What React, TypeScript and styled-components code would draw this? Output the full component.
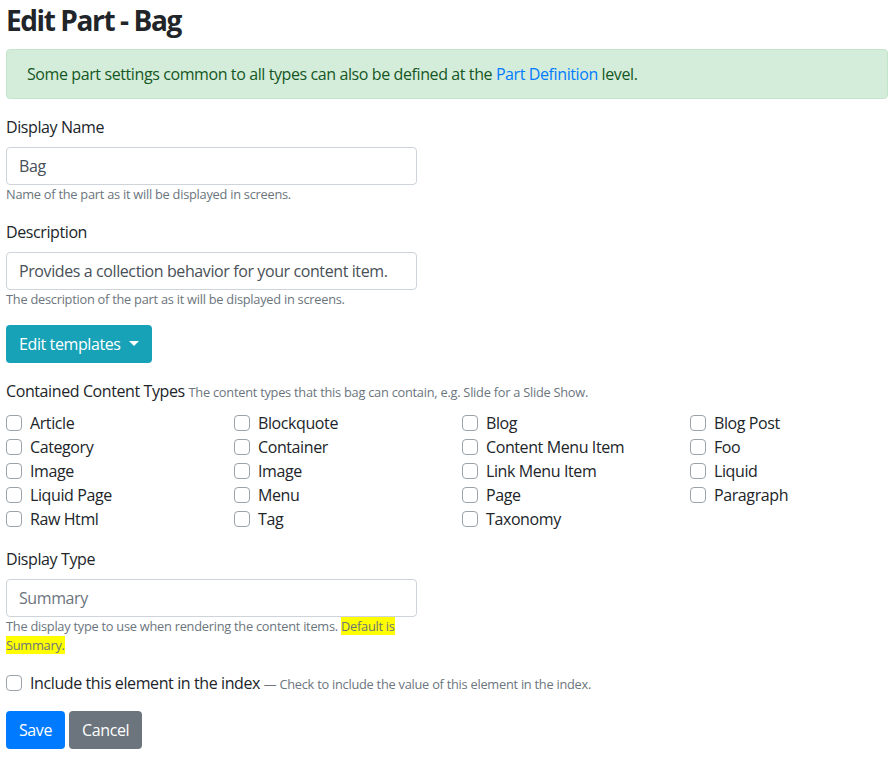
import { useState } from 'react';
import styled, { createGlobalStyle } from 'styled-components';

const GlobalStyle = createGlobalStyle`
    body {
        margin: 0;
        font-family: "Open Sans", "Noto Sans", sans-serif;
        font-size: 16px;
        line-height: 1.5;
        letter-spacing: -0.4px;
        color: #212529;
        background: #fff;
    }
`;

const Page = styled.div`
    padding: 0 6px;
`;
const Title = styled.h1`
    margin: 4px 0 11px;
    font-size: 28px;
    font-weight: 700;
    line-height: 1.2;
    letter-spacing: -1.4px;
`;
const Alert = styled.div`
    padding: 12px 20px;
    margin-bottom: 16px;
    background: #d4edda;
    border: 1px solid #c3e6cb;
    border-radius: 4px;
    color: #155724;
`;
const Link = styled.a`
    color: #007bff;
    text-decoration: none;
`;
const FormGroup = styled.div<{narrow?: boolean}>`
    margin-bottom: 16px;
    max-width: ${props => props.narrow ? "411px" : "none"};
`;
const Label = styled.label`
    display: inline-block;
    margin-bottom: 8px;
`;
const Input = styled.input`
    display: block;
    box-sizing: border-box;
    width: 100%;
    height: 38px;
    padding: 6px 12px;
    font: inherit;
    letter-spacing: inherit;
    color: #495057;
    border: 1px solid #ced4da;
    border-radius: 4px;
    background: #fff;
    &::placeholder {
        color: #6c757d;
    }
`;
const Hint = styled.small`
    display: block;
    font-size: 12.8px;
    line-height: 1.5;
    letter-spacing: -0.25px;
    color: #6c757d;
`;
const InlineHint = styled.span`
    font-size: 12.8px;
    letter-spacing: -0.25px;
    color: #6c757d;
`;
const Highlight = styled.span`
    background: #ffff00;
`;
const Button = styled.button<{variant: "info" | "primary" | "secondary"}>`
    display: inline-flex;
    align-items: center;
    height: 38px;
    padding: 6px 12px;
    font: inherit;
    letter-spacing: inherit;
    color: #fff;
    border: 1px solid transparent;
    border-radius: 4px;
    background: ${props => props.variant === "info" ? "#17a2b8" : props.variant === "primary" ? "#007bff" : "#6c757d"};
    cursor: pointer;
`;
const Caret = styled.span`
    display: inline-block;
    margin-left: 8px;
    border-top: 5px solid #fff;
    border-left: 5px solid transparent;
    border-right: 5px solid transparent;
`;
const CheckGrid = styled.div`
    display: grid;
    grid-template-columns: repeat(4, 228px);
`;
const CheckRow = styled.label`
    display: flex;
    align-items: center;
    gap: 8px;
    height: 24px;
`;
const Box = styled.input`
    appearance: none;
    box-sizing: border-box;
    width: 16px;
    height: 16px;
    margin: 0;
    border: 1px solid #9ca2a9;
    border-radius: 4px;
    background: #fff;
    &:checked {
        background: #007bff;
        border-color: #007bff;
    }
`;
const Actions = styled.div`
    display: flex;
    gap: 4px;
`;

const ContentTypes = [
    "Article", "Blockquote", "Blog", "Blog Post",
    "Category", "Container", "Content Menu Item", "Foo",
    "Image", "Image", "Link Menu Item", "Liquid",
    "Liquid Page", "Menu", "Page", "Paragraph",
    "Raw Html", "Tag", "Taxonomy"
];

const App = () => {
    const [checked, setChecked] = useState<boolean[]>(ContentTypes.map(() => false));

    return (
        <Page>
            <GlobalStyle/>
            <Title>Edit Part - Bag</Title>
            <Alert>
                Some part settings common to all types can also be defined at the <Link href="#">Part Definition</Link> level.
            </Alert>
            <FormGroup narrow>
                <Label>Display Name</Label>
                <Input defaultValue="Bag"/>
                <Hint>Name of the part as it will be displayed in screens.</Hint>
            </FormGroup>
            <FormGroup narrow>
                <Label>Description</Label>
                <Input defaultValue="Provides a collection behavior for your content item."/>
                <Hint>The description of the part as it will be displayed in screens.</Hint>
            </FormGroup>
            <FormGroup>
                <Button variant="info">Edit templates<Caret/></Button>
            </FormGroup>
            <FormGroup>
                <Label>Contained Content Types <InlineHint>The content types that this bag can contain, e.g. Slide for a Slide Show.</InlineHint></Label>
                <CheckGrid>
                    {ContentTypes.map((name, i) => (
                        <CheckRow key={i}>
                            <Box
                                type="checkbox"
                                checked={checked[i]}
                                onChange={() => setChecked(checked.map((c, j) => j === i ? !c : c))}
                            />
                            {name}
                        </CheckRow>
                    ))}
                </CheckGrid>
            </FormGroup>
            <FormGroup narrow>
                <Label>Display Type</Label>
                <Input placeholder="Summary"/>
                <Hint>The display type to use when rendering the content items. <Highlight>Default is Summary.</Highlight></Hint>
            </FormGroup>
            <FormGroup>
                <CheckRow>
                    <Box type="checkbox"/>
                    <span>Include this element in the index <InlineHint>— Check to include the value of this element in the index.</InlineHint></span>
                </CheckRow>
            </FormGroup>
            <Actions>
                <Button variant="primary">Save</Button>
                <Button variant="secondary">Cancel</Button>
            </Actions>
        </Page>
    )
}
export default App;
